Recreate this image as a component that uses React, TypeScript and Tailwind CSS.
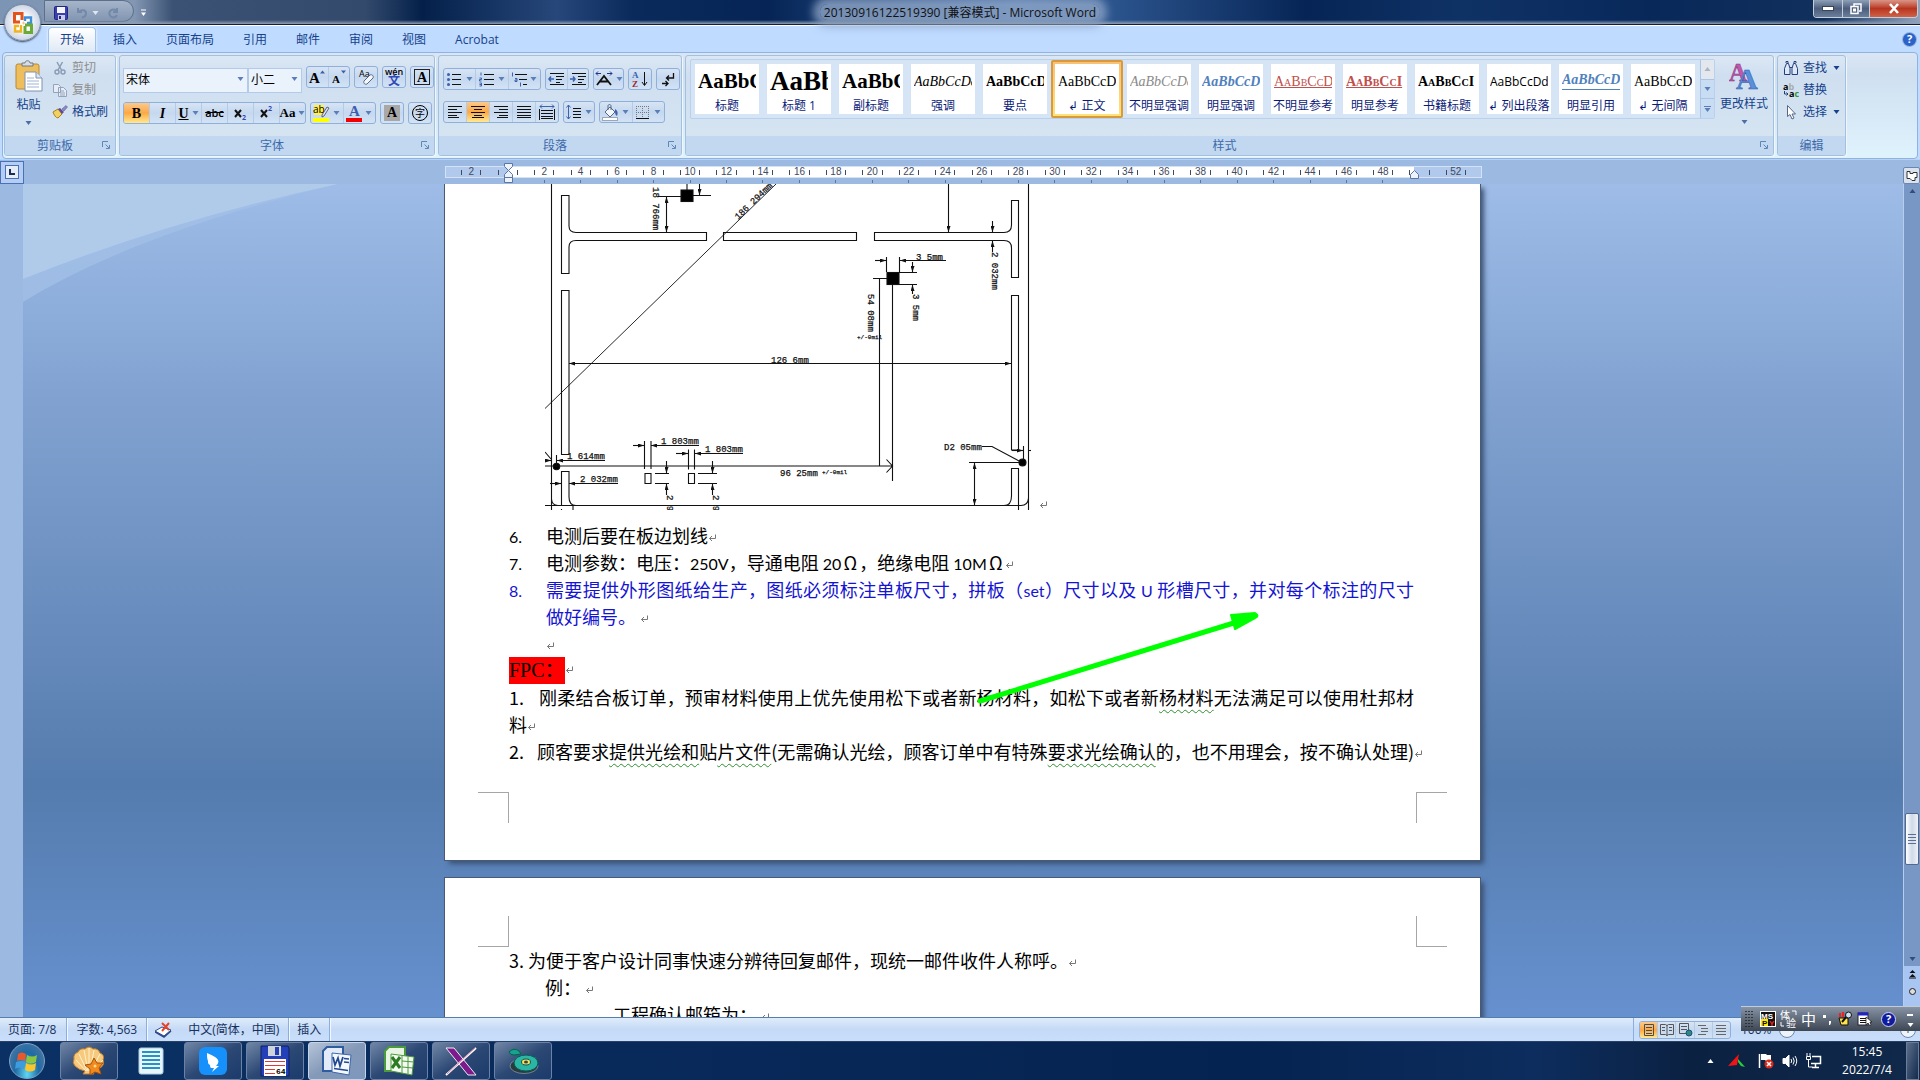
import type { ReactNode } from "react";
import clsx from "clsx";

const UI = "font-['Open_Sans','Noto_Sans_CJK_SC',sans-serif]";

/* ---------- small shared pieces ---------- */

function Caret({ className = "text-[#5a7fb8]" }: { className?: string }) {
  return (
    <svg width="7" height="4" viewBox="0 0 7 4" className={clsx("shrink-0", className)}>
      <path d="M0.5 0h6L3.5 4z" fill="currentColor" />
    </svg>
  );
}

function Mark() {
  return (
    <svg width="9" height="9" viewBox="0 0 9 9" className="inline-block shrink-0 text-[#777]">
      <path d="M7.5 0.5v4h-6M4 2L1.5 4.5L4 7" fill="none" stroke="currentColor" />
    </svg>
  );
}

function Launcher() {
  return (
    <button aria-label="更多选项" className="flex size-[10px] items-center justify-center">
      <svg width="9" height="9" viewBox="0 0 9 9" fill="none" stroke="#5f86b8">
        <path d="M0.5 6V0.5H6M3.5 3.5l3.5 3.5M7.5 4v3.5H4" />
      </svg>
    </button>
  );
}

function Group({ label, launcher, className, children }: { label: string; launcher?: boolean; className?: string; children: ReactNode }) {
  return (
    <section
      className={clsx(
        "flex h-[101px] flex-col rounded-[3px] border border-[#a3c0de] bg-linear-to-b from-[#dce7f4] from-0% via-[#cfdff0] via-20% to-[#d8e6f2] shadow-[1px_1px_0_#eef7fd]",
        className
      )}
    >
      <div className="flex min-h-0 flex-1">{children}</div>
      <div className="flex h-[19px] items-center rounded-b-[2px] bg-[#c1d8f0] px-1 text-[12px] text-[#3e6aaa]">
        <span className="flex-1 text-center">{label}</span>
        {launcher && <Launcher />}
      </div>
    </section>
  );
}

function Cluster({ children, className = "h-[22px]" }: { children: ReactNode; className?: string }) {
  return (
    <div className={clsx("flex shrink-0 divide-x divide-[#b4cbe8] overflow-hidden rounded-[3px] border border-[#8fb0db] bg-linear-to-b from-[#d7e4f4] via-[#c5d8ef] to-[#d3e3f5]", className)}>
      {children}
    </div>
  );
}

function Tool({ label, active, className, caret, children }: { label: string; active?: boolean; className?: string; caret?: boolean; children: ReactNode }) {
  return (
    <button
      aria-label={label}
      className={clsx(
        "flex min-w-0 flex-1 items-center justify-center text-black",
        active && "bg-linear-to-b from-[#fbc98a] via-[#fba843] to-[#ffe98f]",
        caret && "gap-[3px]",
        className
      )}
    >
      {children}
      {caret && <Caret />}
    </button>
  );
}

function Lines({ d, w = 16, extra, tone = "#111" }: { d: string; w?: number; extra?: ReactNode; tone?: string }) {
  return (
    <svg width={w} height="16" viewBox={`0 0 ${w} 16`} fill="none" stroke={tone} className="shrink-0">
      <path d={d} strokeWidth="1" />
      {extra}
    </svg>
  );
}

/* ---------- title bar and tabs ---------- */

function OfficeButton() {
  return (
    <button aria-label="Office 按钮" className="absolute top-1 left-1 z-10 flex size-[37px] items-center justify-center rounded-full border border-[#7f8ea8] bg-radial from-white from-30% via-[#e3e8f2] to-[#aebfd8] shadow-[0_1px_2px_#345]">
      <svg width="24" height="24" viewBox="0 0 24 24" fill="none" strokeWidth="3">
        <path d="M9 11H3.5V2.500H11V9" stroke="#e4531b" />
        <path d="M14 10V6.500h6V12h-4" stroke="#3f8edb" strokeWidth="2.400" />
        <path d="M10 14v6.500H4V15h4" stroke="#f3b31c" strokeWidth="2.400" />
        <path d="M14 14h6.500v7.500H14V15" stroke="#6aab35" />
        <path d="M11 12h3M12.500 10.500v3" stroke="#f6c08c" strokeWidth="1" />
      </svg>
    </button>
  );
}

function TitleBar() {
  return (
    <header className="relative flex h-[25px] items-start border-b border-[#10203c] bg-[linear-gradient(90deg,#7d95b5_0%,#8397b3_7%,#3b5274_9%,#334a6c_19%,#04204a_22%,#27477a_29%,#0a2a5c_33%,#062556_40%,#3e6ba8_53%,#062556_68%,#0f3264_76%,#08285a_86%,#12305c_95%,#90a3bd_100%)]">
      <div className="pointer-events-none absolute inset-x-0 bottom-0 h-1 bg-linear-to-b from-transparent to-[#8f9fb5]" />
      <div className="ml-[44px] flex h-[22px] w-[90px] items-center gap-2 rounded-r-full border border-[#5d6f8b] bg-linear-to-b from-[#a5b5ca] to-[#8295b1] pt-1 pl-[9px]">
        <button aria-label="保存">
          <svg width="14" height="14" viewBox="0 0 14 14">
            <rect x="0.500" y="0.500" width="13" height="13" rx="1" fill="#3c3fae" stroke="#23267e" />
            <rect x="3" y="1" width="8" height="6" fill="#f4f6ff" />
            <rect x="4" y="9" width="7" height="5" fill="#c9cbe8" />
            <rect x="5" y="10" width="2" height="3" fill="#23267e" />
          </svg>
        </button>
        <button aria-label="撤消" className="flex items-center gap-1">
          <svg width="12" height="12" viewBox="0 0 12 12" fill="none" stroke="#7289a9" strokeWidth="2">
            <path d="M2 1v4h4M2.500 5C6 2 10 3 10 6.500c0 2-1.500 3.500-4 4" />
          </svg>
          <Caret className="text-[#dfe6f0]" />
        </button>
        <button aria-label="恢复">
          <svg width="12" height="12" viewBox="0 0 12 12" fill="none" stroke="#7289a9" strokeWidth="2">
            <path d="M10 1v4H6M9.500 4A4 4 0 1 0 10 8" />
          </svg>
        </button>
      </div>
      <button aria-label="自定义快速访问工具栏" className="mt-[9px] ml-[6px]">
        <svg width="7" height="8" viewBox="0 0 7 8">
          <path d="M1 1h5" stroke="#fff" />
          <path d="M1 3.500h5L3.500 7z" fill="#fff" />
        </svg>
      </button>
      <h1 className="flex-1 pt-1 pr-[40px] text-center text-[12px] leading-[18px] text-[#111]">
        <span className="inline-block h-[16px] rounded-full bg-[#8ea5c6]/80 px-1 leading-[18px] shadow-[0_0_8px_7px_rgb(142_165_198/0.8)]">20130916122519390 [兼容模式] - Microsoft Word</span>
      </h1>
      <div className="mr-[2px] flex h-[18px] w-[105px] overflow-hidden rounded-b-[4px] border border-t-0 border-[#c3cedd]">
        <button aria-label="最小化" className="flex w-[29px] items-center justify-center border-r border-[#c3cedd] bg-linear-to-b from-[#8fa0b8] via-[#4c5e7c] to-[#6b7e9b]">
          <svg width="12" height="5" viewBox="0 0 12 5"><rect x="0.500" y="0.500" width="11" height="4" fill="#fff" stroke="#3a4458" /></svg>
        </button>
        <button aria-label="向下还原" className="flex w-[27px] items-center justify-center border-r border-[#c3cedd] bg-linear-to-b from-[#8fa0b8] via-[#4c5e7c] to-[#6b7e9b]">
          <svg width="12" height="12" viewBox="0 0 12 12" fill="none" stroke="#fff" strokeWidth="1.500"><path d="M4 3V1h7v7H9" /><rect x="1" y="3.500" width="7" height="7" /><rect x="3.500" y="6" width="2" height="2" strokeWidth="1" /></svg>
        </button>
        <button aria-label="关闭" className="flex flex-1 items-center justify-center bg-linear-to-b from-[#d99487] via-[#b8341f] to-[#cf6247]">
          <svg width="12" height="11" viewBox="0 0 12 11" stroke="#fff" strokeWidth="2.600"><path d="M2 1l8 9M10 1L2 10" /></svg>
        </button>
      </div>
    </header>
  );
}

const tabs = ["开始", "插入", "页面布局", "引用", "邮件", "审阅", "视图", "Acrobat"];

function Tabs() {
  return (
    <nav className="flex h-[27px] items-end border-t border-white bg-[#bfdbff] pl-[48px] text-[12px] text-[#15428b]">
      <div className="flex h-[25px] flex-1 gap-px">
        {tabs.map((t, i) => (
          <button
            key={t}
            className={clsx("h-full rounded-t-[4px] border border-b-0", i === 0 ? "mr-[2px] border-[#9dc3ee] bg-linear-to-b from-white to-[#dfe9f5] px-[11px] shadow-[0_0_3px_#fff]" : "border-transparent px-[13px]")}
          >
            {t}
          </button>
        ))}
      </div>
      <button aria-label="帮助" className="mr-[3px] mb-[5px] flex size-[15px] items-center justify-center rounded-full border border-[#9fb8dd] bg-[#2a62c9] text-[11px] font-bold text-white">
        ?
      </button>
    </nav>
  );
}

/* ---------- ribbon groups ---------- */

function Clipboard() {
  const rows = [
    {
      t: "剪切",
      off: true,
      icon: (
        <svg width="14" height="14" viewBox="0 0 14 14" fill="none" stroke="#8b9cb5" strokeWidth="1.500">
          <path d="M4 1l4.500 8M9.500 1L5 9" /><circle cx="4" cy="11" r="2" /><circle cx="10" cy="11" r="2" />
        </svg>
      ),
    },
    {
      t: "复制",
      off: true,
      icon: (
        <svg width="14" height="14" viewBox="0 0 14 14" fill="#e6ecf5" stroke="#93a3bb">
          <path d="M0.500 1.500h5l2 2v6h-7zM5.500 4.500h5l3 3v6h-8z" /><path d="M7 8h4M7 10h5M7 12h5" />
        </svg>
      ),
    },
    {
      t: "格式刷",
      icon: (
        <svg width="16" height="14" viewBox="0 0 16 14">
          <path d="M1 7l5-3 4 5-4 4c-2 0-4-3-5-6z" fill="#f1d25e" stroke="#a98118" />
          <path d="M6 4l2-1 4 4-2 2z" fill="#5b4a9c" /><path d="M10 4l4-3.500L15.500 2 12 6z" fill="#8f8cc4" stroke="#4b4785" strokeWidth="0.500" />
        </svg>
      ),
    },
  ];
  return (
    <Group label="剪贴板" launcher className="w-[112px] shrink-0">
      <button className="flex w-[47px] flex-col items-center pt-1 text-[12px] leading-4 text-[#15428b]">
        <svg width="28" height="32" viewBox="0 0 28 32">
          <rect x="1" y="4" width="23" height="25" rx="2" fill="#eebd5c" stroke="#b98a34" />
          <path d="M7 6V3h3c0-3 5-3 5 0h3v3z" fill="#d8dde4" stroke="#6f7885" />
          <path d="M10 12h11l6 6v13H10z" fill="#fff" stroke="#7c92b5" />
          <path d="M21 12v6h6" fill="#dce6f4" stroke="#7c92b5" />
          <path d="M12 18h7M12 21h12M12 24h12M12 27h12" stroke="#9fb4d3" />
        </svg>
        <span className="mt-[5px]">粘贴</span>
        <Caret className="mt-2 text-[#4a6fa8]" />
      </button>
      <div className="flex flex-col pt-[1px]">
        {rows.map((r) => (
          <button key={r.t} className={clsx("flex h-[22px] items-center gap-1 text-[12px]", r.off ? "text-[#8d8d8d]" : "text-[#15428b]")}>
            <span className="flex w-[16px] justify-center">{r.icon}</span>
            {r.t}
          </button>
        ))}
      </div>
    </Group>
  );
}

function Combo({ id, label, value, className }: { id: string; label: string; value: string; className: string }) {
  return (
    <div className={clsx("relative h-[25px]", className)}>
      <label htmlFor={id} className="sr-only">{label}</label>
      <select id={id} className="h-full w-full appearance-none border border-[#b3cbe8] bg-[#eaf2fb] pl-[2px] text-[12px] text-black">
        <option>{value}</option>
      </select>
      <Caret className="pointer-events-none absolute top-[11px] right-[4px] text-[#5a7fb8]" />
    </div>
  );
}

const SERIF = "font-['Liberation_Serif',serif]";

function FontGroup() {
  return (
    <Group label="字体" launcher className="w-[316px] shrink-0">
      <div className="flex flex-1 flex-col gap-[11px] pt-[10px] pl-[3px]">
        <div className="flex gap-1">
          <div className="flex">
            <Combo id="font" label="字体名称" value="宋体" className="w-[125px]" />
            <Combo id="size" label="字号" value="小二" className="w-[54px]" />
          </div>
          <Cluster className="h-[22px] w-[44px]">
            <Tool label="增大字体">
              <svg width="18" height="16" viewBox="0 0 18 16"><text x="1" y="14" fontSize="15" fontWeight="700" fontFamily="Liberation Serif">A</text><path d="M12 4.500h5L14.500 1.500z" fill="#3c5fa8" /></svg>
            </Tool>
            <Tool label="缩小字体">
              <svg width="18" height="16" viewBox="0 0 18 16"><text x="2" y="14" fontSize="11" fontWeight="700" fontFamily="Liberation Serif">A</text><path d="M11 1.500h5L13.500 4.500z" fill="#3c5fa8" /></svg>
            </Tool>
          </Cluster>
          <Cluster className="h-[22px] w-[24px]">
            <Tool label="清除格式">
              <svg width="17" height="17" viewBox="0 0 17 17">
                <text x="1" y="8" fontSize="9" fontFamily="Open Sans">Aa</text>
                <path d="M6 12l6-6c2-1 4 1 3 3l-6 6c-2 1-4-1-3-3z" fill="#f5f7fb" stroke="#55688a" />
              </svg>
            </Tool>
          </Cluster>
          <Cluster className="h-[22px] w-[24px]">
            <Tool label="拼音指南">
              <svg width="20" height="20" viewBox="0 0 20 20" textAnchor="middle"><text x="10" y="8" fontSize="9" fontWeight="600" fontFamily="Open Sans">wén</text><text x="10" y="18" fontSize="12" fontWeight="700" fontFamily="Noto Sans CJK SC" fill="#3149b5">文</text></svg>
            </Tool>
          </Cluster>
          <Cluster className="h-[22px] w-[24px]">
            <Tool label="字符边框"><span className={clsx(SERIF, "size-4 border border-[#222] text-[14px] leading-[15px] font-bold")}>A</span></Tool>
          </Cluster>
        </div>
        <div className="flex gap-1">
          <Cluster className="h-[22px] w-[183px] text-[14px]">
            <Tool label="加粗" active className={clsx(SERIF, "font-bold")}>B</Tool>
            <Tool label="倾斜" className={clsx(SERIF, "font-bold italic")}>I</Tool>
            <Tool label="下划线" className={clsx(SERIF, "font-bold")} caret><span className="underline">U</span></Tool>
            <Tool label="删除线" className="text-[11px] font-semibold"><s>abc</s></Tool>
            <Tool label="下标">
              <svg width="15" height="16" viewBox="0 0 15 16"><path d="M2 5l6 7M8 5l-6 7" stroke="#111" strokeWidth="2" /><text x="9" y="15" fontSize="7" fontWeight="700" fontFamily="Open Sans" fill="#3149b5">2</text></svg>
            </Tool>
            <Tool label="上标">
              <svg width="15" height="16" viewBox="0 0 15 16"><path d="M2 5l6 7M8 5l-6 7" stroke="#111" strokeWidth="2" /><text x="9" y="6" fontSize="7" fontWeight="700" fontFamily="Open Sans" fill="#3149b5">2</text></svg>
            </Tool>
            <Tool label="更改大小写" className={clsx(SERIF, "text-[13px] font-bold")} caret>Aa</Tool>
          </Cluster>
          <Cluster className="h-[22px] w-[66px]">
            <Tool label="突出显示" caret>
              <svg width="17" height="18" viewBox="0 0 17 18">
                <rect x="1" y="1" width="10" height="10" fill="#fff04a" />
                <text x="0" y="9" fontSize="10" fontFamily="Open Sans">ab</text>
                <path d="M9 11l5-8 2 1-5 8-2 1z" fill="#dfe5ef" stroke="#445" strokeWidth="0.800" />
                <rect x="0" y="14" width="16" height="4" fill="#ff0" />
              </svg>
            </Tool>
            <Tool label="字体颜色" caret>
              <svg width="16" height="18" viewBox="0 0 16 18">
                <text x="3" y="12" fontSize="15" fontFamily="Liberation Serif" fontWeight="700" fill="#3a5fae">A</text>
                <rect x="0" y="14" width="16" height="4" fill="#f00000" />
              </svg>
            </Tool>
          </Cluster>
          <Cluster className="h-[22px] w-[24px]">
            <Tool label="字符底纹"><span className={clsx(SERIF, "size-4 bg-[#a8a8a8] text-[14px] leading-4 font-bold")}>A</span></Tool>
          </Cluster>
          <Cluster className="h-[22px] w-[24px]">
            <Tool label="带圈字符"><span className="size-4 rounded-full border border-black text-[10px] leading-[14px]">字</span></Tool>
          </Cluster>
        </div>
      </div>
    </Group>
  );
}

const BLUE = "#3b62ad";

function ParagraphGroup() {
  return (
    <Group label="段落" launcher className="w-[244px] shrink-0">
      <div className="flex flex-1 flex-col gap-[11px] pt-3 pl-1">
        <div className="flex gap-1">
          <Cluster className="h-[22px] w-[98px]">
            <Tool label="项目符号" caret><Lines d="M5 3.500h9M5 8.500h9M5 13.500h9" extra={<g fill={BLUE} stroke="none"><circle cx="1.500" cy="3.500" r="1.500" /><circle cx="1.500" cy="8.500" r="1.500" /><circle cx="1.500" cy="13.500" r="1.500" /></g>} /></Tool>
            <Tool label="编号" caret><Lines d="M5 3.500h10M5 8.500h10M5 13.500h10" extra={<path d="M2 1.500v3M0.500 7h2v1.500h-2V10h2M0.500 12h2v3h-2M0.500 13.500h2" stroke={BLUE} />} /></Tool>
            <Tool label="多级列表" caret><Lines d="M4 3.500h12M8 8.500h8M12 13.500h4" extra={<path d="M1.500 1.500v4M4 7.500h2v3H4v-1.500h2M9.500 11.500v4" stroke={BLUE} />} /></Tool>
          </Cluster>
          <Cluster className="h-[22px] w-[44px]">
            <Tool label="减少缩进量"><Lines d="M2 2.500h14M8 5.500h8M8 8.500h6M8 11.500h4M2 13.500h14" extra={<path d="M6 8H1M3 5.500L1 8l2 2.500" stroke={BLUE} strokeWidth="1.500" />} /></Tool>
            <Tool label="增加缩进量"><Lines d="M2 2.500h14M8 5.500h8M8 8.500h6M8 11.500h4M2 13.500h14" extra={<path d="M0 8h5M3 5.500L5 8l-2 2.500" stroke={BLUE} strokeWidth="1.500" />} /></Tool>
          </Cluster>
          <Cluster className="h-[22px] w-[31px]">
            <Tool label="中文版式" caret><Lines w={18} d="" extra={<><path d="M2 14l7-9 7 9M5 10.500h8" strokeWidth="1.800" /><path d="M6 2.500H1M3 0.500L1 2.500l2 2M12 2.500h5M15 0.500l2 2-2 2" stroke="#22358c" /></>} /></Tool>
          </Cluster>
          <Cluster className="h-[22px] w-[24px]">
            <Tool label="排序"><svg width="16" height="18" viewBox="0 0 16 18"><text x="0" y="8" fontSize="9" fontWeight="700" fontFamily="Liberation Serif" fill={BLUE}>A</text><text x="0" y="17" fontSize="9" fontWeight="700" fontFamily="Liberation Serif" fill="#a0282c">Z</text><path d="M12.500 2v13M10 12l2.500 3.500L15 12" fill="none" stroke="#111" /></svg></Tool>
          </Cluster>
          <Cluster className="h-[22px] w-[24px]">
            <Tool label="显示编辑标记"><Lines d="" extra={<path d="M13.500 2v5H7M9 4.500L6.500 7 9 9.500M2 12.500h6M5.500 10L8 12.500 5.500 15" strokeWidth="1.300" />} /></Tool>
          </Cluster>
        </div>
        <div className="flex gap-1">
          <Cluster className="h-[22px] w-[116px]">
            <Tool label="左对齐"><Lines d="M1 2.500h14M1 5.500h9M1 8.500h14M1 11.500h9M1 13.500h11" /></Tool>
            <Tool label="居中" active><Lines d="M1 2.500h14M4 5.500h8M1 8.500h14M4 11.500h8M2 13.500h12" /></Tool>
            <Tool label="右对齐"><Lines d="M1 2.500h14M6 5.500h9M1 8.500h14M6 11.500h9M4 13.500h11" /></Tool>
            <Tool label="两端对齐"><Lines d="M1 2.500h14M1 5.500h14M1 8.500h14M1 11.500h14M1 13.500h14" /></Tool>
            <Tool label="分散对齐"><Lines d="M2 6.500h12M2 9.500h12M2 12.500h12M2 14.500h12M0.500 5v11M15.500 5v11" extra={<path d="M1 2.500h14M3 0.500L1 2.500l2 2M13 0.500l2 2-2 2" stroke={BLUE} />} /></Tool>
          </Cluster>
          <Cluster className="h-[22px] w-[32px]">
            <Tool label="行距" caret><Lines d="M7 4.500h8M7 7.500h8M7 10.500h8M7 13.500h8" extra={<path d="M2.500 1v14M0.500 3.500L2.500 1l2 2.500M0.500 12.500l2 2.500 2-2.500" stroke={BLUE} />} /></Tool>
          </Cluster>
          <Cluster className="h-[22px] w-[66px]">
            <Tool label="底纹" caret>
              <svg width="17" height="17" viewBox="0 0 17 17"><path d="M3 8l5-5 5 5-5 5z" fill="#f3f6fb" stroke="#55688a" /><path d="M6 6V2c0-2 3-2 3 0v4" fill="none" stroke="#55688a" /><path d="M13 5c3 2 3 4 2 7-2-1-2-3-2-7z" fill={BLUE} /><rect x="0.500" y="13.500" width="15" height="3" fill="#fff" stroke="#9aa7bb" /></svg>
            </Tool>
            <Tool label="边框" caret><Lines d="M1 14.500h13" extra={<path d="M1.500 2v12M7.500 2v12M13.500 2v12M1 2.500h13M1 8.500h13" stroke="#777" strokeDasharray="1 1" />} /></Tool>
          </Cluster>
        </div>
      </div>
    </Group>
  );
}

const styleItems = [
  { name: "标题", s: "AaBbC", c: "text-[21px] font-bold" },
  { name: "标题 1", s: "AaBb", c: "text-[27px] font-bold" },
  { name: "副标题", s: "AaBbC", c: "text-[21px] font-bold" },
  { name: "强调", s: "AaBbCcDd", c: "text-[14px] italic" },
  { name: "要点", s: "AaBbCcD", c: "text-[14px] font-bold" },
  { name: "↲ 正文", s: "AaBbCcDd", c: "text-[14px]", on: true },
  { name: "不明显强调", s: "AaBbCcDd", c: "text-[14px] italic text-[#8a8a8a]" },
  { name: "明显强调", s: "AaBbCcDd", c: "text-[14px] italic font-bold text-[#4f81bd]" },
  { name: "不明显参考", s: "AaBbCcDd", c: "text-[14px] [font-variant:small-caps] text-[#c0504d] underline" },
  { name: "明显参考", s: "AaBbCcI", c: "text-[14px] [font-variant:small-caps] font-bold text-[#c0504d] underline" },
  { name: "书籍标题", s: "AaBbCcI", c: "text-[14px] [font-variant:small-caps] font-bold" },
  { name: "↲ 列出段落", s: "AaBbCcDd", c: "text-[12px] font-['Open_Sans']" },
  { name: "明显引用", s: "AaBbCcDd", c: "text-[14px] italic font-bold text-[#4f81bd] border-b border-[#4f81bd] pb-[2px]" },
  { name: "↲ 无间隔", s: "AaBbCcDd", c: "text-[14px]" },
];

function StylesGroup() {
  return (
    <Group label="样式" launcher className="min-w-0 flex-1">
      <div className="mt-[3px] ml-1 flex h-[60px] min-w-0 flex-1 rounded-[2px] border border-[#b9d1ec] bg-[#d6e5f5]">
        <div className="flex min-w-0 flex-1 overflow-hidden">
          {styleItems.map((it) => (
            <button
              key={it.name}
              className={clsx("h-[58px] w-[72px] shrink-0 rounded-[2px] border-2 p-[2px]", it.on ? "border-[#d99a3c] bg-linear-to-b from-[#f8c078] to-[#ffe27a]" : "border-transparent")}
            >
              <span className="flex h-full flex-col justify-between overflow-hidden bg-white px-[3px]">
                <span className={clsx("mt-1 flex h-[27px] items-center overflow-hidden leading-none whitespace-nowrap text-black", SERIF)}>
                  <span className={it.c}>{it.s}</span>
                </span>
                <span className="-mx-[3px] text-center text-[12px] leading-[17px] whitespace-nowrap text-[#0b1b7a]">{it.name}</span>
              </span>
            </button>
          ))}
        </div>
        <div className="flex w-[14px] flex-col divide-y divide-[#a9c4e4] border-l border-[#a9c4e4] bg-[#c8dcf3]">
          <button aria-label="上一行" className="flex flex-1 items-center justify-center bg-[#e3e8ee]"><Caret className="rotate-180 text-[#aab4c2]" /></button>
          <button aria-label="下一行" className="flex flex-1 items-center justify-center"><Caret /></button>
          <button aria-label="其他" className="flex flex-1 flex-col items-center justify-center gap-px"><span className="h-px w-[7px] bg-[#5a7fb8]" /><Caret /></button>
        </div>
      </div>
      <button className="flex w-[58px] shrink-0 flex-col items-center pt-[5px] text-[12px] leading-4 text-[#15428b]">
        <svg width="30" height="30" viewBox="0 0 30 30">
          <text x="0" y="20" fontSize="25" fontWeight="700" fontFamily="Liberation Serif" fill="#c257ae" stroke="#83347a" strokeWidth="0.500">A</text>
          <text x="7" y="28" fontSize="30" fontWeight="700" fontFamily="Liberation Serif" fill="#5b8fdc" stroke="#2a57a5" strokeWidth="0.500">A</text>
        </svg>
        <span className="mt-[5px] whitespace-nowrap">更改样式</span>
        <Caret className="mt-2 text-[#4a6fa8]" />
      </button>
    </Group>
  );
}

function EditGroup() {
  return (
    <Group label="编辑" className="w-[69px] shrink-0">
      <div className="flex flex-1 flex-col pt-[1px] pl-[5px] text-[12px] text-[#15428b]">
        <button className="flex h-[22px] items-center gap-1">
          <svg width="16" height="14" viewBox="0 0 16 14" fill="#dfe8f6" stroke="#223f7c"><path d="M1.500 13.500v-6l2-5h2l1.500 5v6zM9 13.500v-6l1.500-5h2l2 5v6zM3 2V0.500h2V2M11 2V0.500h2V2M7 6.500h2" /></svg>
          查找 <Caret className="ml-[2px]" />
        </button>
        <button className="flex h-[22px] items-center gap-1">
          <svg width="16" height="16" viewBox="0 0 16 16" fontFamily="Open Sans" fontSize="9" fontWeight="700"><text x="0" y="8">a<tspan fill="#aaa">b</tspan></text><text x="6" y="15">a<tspan fill="#2c9a2c">c</tspan></text><path d="M1.500 9v3H5M3.500 10.500L5 12l-1.500 1.500" fill="none" stroke="#223f7c" /></svg>
          替换
        </button>
        <button className="flex h-[22px] items-center gap-1">
          <svg width="16" height="15" viewBox="0 0 16 15"><path d="M4.500 0.500v11l2.500-2 2 4.500 2-1-2-4h3.500z" fill="#fff" stroke="#55688a" /></svg>
          选择 <Caret className="ml-[2px]" />
        </button>
      </div>
    </Group>
  );
}

function Ribbon() {
  return (
    <div className="h-[107px] bg-[#bfdbff] px-[2px]">
      <div className="flex h-full gap-[3px] rounded-[4px] border border-[#8db2e3] bg-linear-to-b from-[#dbe6f4] via-[#cfdff0] via-20% to-[#dff3fd] px-px pt-[2px]">
        <Clipboard />
        <FontGroup />
        <ParagraphGroup />
        <StylesGroup />
        <EditGroup />
        <div className="w-[67px] shrink-0" />
      </div>
    </div>
  );
}

/* ---------- ruler ---------- */

const marks = Array.from({ length: 28 }, (_, i) => i * 2 - 2);

function Ruler() {
  return (
    <div className="flex h-[25px] items-center border-t border-[#b9d3f3] bg-[#9bb9e1]">
      <button aria-label="制表符" className="flex h-[23px] w-[24px] items-center justify-center border border-[#4a70b8] bg-[#b5cdf3]">
        <span className="flex size-[14px] items-center justify-center border border-[#4a70b8] bg-[#e3ecf8]">
          <svg width="6" height="6" viewBox="0 0 6 6"><path d="M1 0v5h5" fill="none" stroke="#1c2c50" strokeWidth="2" /></svg>
        </span>
      </button>
      <div className="flex-1">
        <div className="relative mx-auto w-[1037px]">
          <div className="flex h-[12px] border border-[#d4e2f6] bg-linear-to-r from-[#b1c9ec] from-[62px] via-white via-[62px] to-white">
            <div className="flex flex-1 bg-linear-to-l from-[#b1c9ec] from-[67px] to-transparent to-[67px] px-[7px] font-['Liberation_Sans'] text-[10px] leading-[10px] text-[#3e4a60]">
              {marks.map((n) => (
                <span key={n} className="grid flex-1 grid-cols-4 items-center">
                  <i className="h-[5px] w-px justify-self-end bg-[#3e4a60]" />
                  <span className="col-span-2 text-center">{n === 0 || n === 50 ? "" : Math.abs(n)}</span>
                  <i className="h-[5px] w-px bg-[#3e4a60]" />
                </span>
              ))}
            </div>
          </div>
          <div className="absolute inset-x-0 top-[14px] flex px-2">
            {marks.map((n) => (
              <i key={n} className={clsx("h-[3px] flex-1 bg-[linear-gradient(#5f7596,#5f7596)] bg-[length:1px_3px] bg-center bg-no-repeat", (n <= 0 || n >= 50) && "invisible")} />
            ))}
          </div>
          <svg width="11" height="21" viewBox="0 0 11 21" className="absolute -top-[3px] left-[58px]" fill="#eef3fb" stroke="#5b76a5">
            <path d="M1.500 0.500h8v3l-4 4-4-4zM5.500 7.500l4 4v3h-8v-3zM1.500 14.500h8v5h-8z" />
          </svg>
          <svg width="9" height="9" viewBox="0 0 9 9" className="absolute top-[4px] left-[965px]" fill="#eef3fb" stroke="#5b76a5">
            <path d="M4.500 0.500l4 4v4h-8v-4z" />
          </svg>
        </div>
      </div>
      <button aria-label="标尺" className="flex h-[17px] w-[17px] items-center justify-center self-end rounded-[2px] border border-[#6c86ad] bg-[#d9e2ee]">
        <svg width="12" height="12" viewBox="0 0 12 12" fill="#fff" stroke="#333"><path d="M1 1.500h3v2h3v-1h4v5h-2v3H6l-2-2H1z" /></svg>
      </button>
    </div>
  );
}

/* ---------- board outline drawing ---------- */

function BoardDrawing() {
  return (
    <svg width="486" height="326" viewBox="545 184 486 326" fill="none" stroke="#111" strokeWidth="1.100" className="shrink-0">
      <defs>
        <marker id="tip" viewBox="0 0 6 4" refX="6" refY="2" markerWidth="6" markerHeight="4" markerUnits="userSpaceOnUse" orient="auto-start-reverse">
          <path d="M0 0L6 2L0 4z" fill="#111" stroke="none" />
        </marker>
      </defs>
      <path d="M551.500 184V510M1028.500 184V510M545 505.500H1021Q1028 505.500 1028.500 498M551.500 499Q552 505.500 558 505.500" />
      <path d="M561.500 195.500H569V226Q569 232.500 576 232.500H706.500V240.500H576Q569 240.500 569 247V273.500H561.500z" />
      <path d="M723.500 232.500H856.500V240.500H723.500zM561.500 290.500H569V454.500H561.500zM1011.500 295.500H1018.500V450H1011.500z" />
      <path d="M874.500 232.500H1004Q1011.500 232.500 1011.500 225V200.500H1018.500V277.500H1011.500V248Q1011.500 240.500 1004 240.500H874.500z" />
      <path d="M561.500 505.500V471.500H569V497Q569 505.500 576 505.500M1004 505.500Q1011.500 505.500 1011.500 496V468.500H1018.500V510M561.500 509v1" />
      <path d="M545 408.500L776 184" strokeWidth="0.900" />
      <g fill="#000">
        <rect x="681" y="190" width="12" height="11.500" />
        <rect x="887" y="272.500" width="12" height="12" />
        <circle cx="556.500" cy="466.500" r="3.200" />
        <circle cx="1022.500" cy="462.500" r="3.500" />
      </g>
      <path d="M687 184v6M658 196.500h23M693 195.500h18M886.500 257v15M899.500 257v15M899 272.500h18M899 284.500h18M873 278.500h14M879.500 278.500V466M892.500 285V481" />
      <path d="M545 466H892.500M886.500 459.500L892.500 466L886.500 472.500" />
      <path d="M556.500 455v10M644.500 441v28M651 441v28M688.500 449.500v20M694.500 449.500v20M645 473.500h6v10h-6zM688.500 473.500h6v10h-6z" />
      <path d="M655 473.500h14M655 483.500h14M698 473.500h19M698 483.500h19M982 446.500h10L1019 461M1023.500 446v14M969 462.500h50M573 505v5M545 452l6 7" />
      <g markerEnd="url(#tip)">
        <path d="M699.500 184V195" />
        <path d="M948.500 184V232" />
        <path d="M992.500 221V232" />
        <path d="M992.500 252V241" />
        <path d="M875 260.500H886" />
        <path d="M946 260.500H900" />
        <path d="M912.500 262V272" />
        <path d="M912.500 294V285" />
        <path d="M545 460.500H551" />
        <path d="M605 460.500H557" />
        <path d="M550 483.500H561" />
        <path d="M618 483.500H569" />
        <path d="M633 445.500H644" />
        <path d="M699 445.500H651" />
        <path d="M676 453.500H688" />
        <path d="M743 453.500H695" />
        <path d="M666.500 461V473" />
        <path d="M666.500 495V484" />
        <path d="M712.500 461V473" />
        <path d="M712.500 495V484" />
        <path d="M1037 450.500H1029" />
        <path d="M1012 450.500H1023" />
      </g>
      <g markerStart="url(#tip)" markerEnd="url(#tip)">
        <path d="M666.500 197V232" />
        <path d="M569 363.500H1011" />
        <path d="M974.500 463V505" />
      </g>
      <g fill="#111" stroke="#111" strokeWidth="0.250" fontFamily="Liberation Mono" fontSize="9">
        <text x="771" y="363">126 6mm</text>
        <text x="916" y="260">3 5mm</text>
        <text x="780" y="476">96 25mm</text>
        <text x="822" y="474" fontSize="6">+/-0mil</text>
        <text x="567" y="459">1 614mm</text>
        <text x="580" y="482">2 032mm</text>
        <text x="661" y="444">1 803mm</text>
        <text x="705" y="452">1 803mm</text>
        <text x="944" y="450">D2 05mm</text>
        <text x="857" y="339" fontSize="6">+/-0mil</text>
        <text transform="translate(653 187) rotate(90)">18 766mm</text>
        <text transform="translate(992 252) rotate(90)">2 032mm</text>
        <text transform="translate(913 294) rotate(90)">3 5mm</text>
        <text transform="translate(868 294) rotate(90)">54 08mm</text>
        <text transform="translate(667 495) rotate(90)">2 9</text>
        <text transform="translate(713 495) rotate(90)">2 9</text>
        <text transform="translate(738 220) rotate(-44)">186 294mm</text>
      </g>
    </svg>
  );
}

/* ---------- document ---------- */

function Wavy({ children }: { children: ReactNode }) {
  return <span className="underline decoration-[#2f8f2f] decoration-wavy decoration-1 underline-offset-4">{children}</span>;
}

function Ohm() {
  return <span className="inline-block w-[18px] text-center">Ω</span>;
}

const latin = "font-['Lato'] text-[16px] leading-[18px]";
const full = "min-w-0 flex-1 whitespace-nowrap text-justify [text-align-last:justify]";

function Item({ n, blue, children }: { n?: string; blue?: boolean; children: ReactNode }) {
  return (
    <div className={clsx("flex items-baseline", blue && "text-[#1414d2]")}>
      <span className={clsx("w-[37px] shrink-0", latin)}>{n}</span>
      {children}
    </div>
  );
}

function Crop({ bottom }: { bottom?: boolean }) {
  const side = bottom ? "border-b" : "border-t";
  return (
    <div className="flex justify-between px-[33px]">
      <i className={clsx("size-[31px] border-r border-[#a6a6a6]", side)} />
      <i className={clsx("size-[31px] border-l border-[#a6a6a6]", side)} />
    </div>
  );
}

const sheet =
  "relative mx-auto flex w-[1035px] flex-col bg-white shadow-[0_0_0_1px_#4a5a75,4px_4px_5px_#3b5376] font-['Noto_Sans_CJK_SC',sans-serif] text-[18px] leading-[27px] text-black";

function Document() {
  return (
    <main className="relative flex min-h-0 flex-1 bg-[linear-gradient(#9ebce7_0%,#81a2d1_26%,#557cae_72%,#6691cf_100%)]">
      <div className="w-[23px] shrink-0 bg-[#9bb9e1]" />
      <div className="relative min-w-0 flex-1 overflow-hidden pr-px">
        <svg width="320" height="120" viewBox="0 0 320 120" className="absolute top-0 left-0">
          <path d="M0 118Q110 50 315 0H0z" fill="#a1bfe6" opacity="0.800" />
          <path d="M0 95Q150 35 315 0H0z" fill="#b0caea" />
        </svg>
        <article className={clsx(sheet, "h-[676px] pb-[37px]")}>
          <div className="flex items-end gap-1 pl-[100px]">
            <BoardDrawing />
            <span className="flex h-[9px] pl-1"><Mark /></span>
          </div>
          <div className="mt-3 pr-[66px] pl-[64px]">
            <Item n="6."><span>电测后要在板边划线<Mark /></span></Item>
            <Item n="7.">
              <span>电测参数：电压：<span className={latin}>250V</span>，导通电阻 <span className={latin}>20</span><Ohm />，绝缘电阻 <span className={latin}>10M</span><Ohm /><Mark /></span>
            </Item>
            <Item n="8." blue>
              <span className={full}>需要提供外形图纸给生产，图纸必须标注单板尺寸，拼板（<span className={latin}>set</span>）尺寸以及 <span className={latin}>U</span> 形槽尺寸，并对每个标注的尺寸</span>
            </Item>
            <Item blue><span>做好编号。 <Mark /></span></Item>
            <Item><span><Mark /></span></Item>
            <h2 className="flex h-[27px] items-center font-['Liberation_Serif','Noto_Sans_CJK_SC'] text-[20px]"><span className="bg-[#ff0000]">FPC：</span><Mark /></h2>
            <div className="flex">
              <span className="w-[30px] shrink-0">1.</span>
              <p className={full}>刚柔结合板订单，预审材料使用上优先使用松下或者新杨材料，如松下或者新<Wavy>杨材料</Wavy>无法满足可以使用杜邦材</p>
            </div>
            <p>料<Mark /></p>
            <div className="relative flex">
              <span className="w-[28px] shrink-0">2.</span>
              <p className={full}>顾客要求<Wavy>提供光绘和</Wavy>贴<Wavy>片文件</Wavy>(无需确认光绘，顾客订单中有特殊<Wavy>要求光绘确认</Wavy>的，也不用理会，按不确认处理)</p>
              <span className="absolute left-full"><Mark /></span>
            </div>
          </div>
          <div className="mt-auto"><Crop /></div>
          <svg width="284" height="94" viewBox="0 0 284 94" className="absolute top-[427px] left-[530px]">
            <path d="M5 90L262 11" stroke="#00ff00" strokeWidth="5" strokeLinecap="round" />
            <path d="M256 4L280 2Q285 5 280 7L260 18z" fill="#00ff00" stroke="#00ff00" strokeWidth="2" strokeLinejoin="round" />
          </svg>
        </article>
        <article className={clsx(sheet, "mt-[18px] h-[400px] pt-[38px]")}>
          <Crop bottom />
          <div className="pl-[64px]">
            <p>3. 为便于客户设计同事快速分辨待回复邮件，现统一邮件收件人称呼。<Mark /></p>
            <p className="pl-9">例： <Mark /></p>
            <p className="pl-[104px]">工程确认邮箱为： <Mark /></p>
          </div>
        </article>
      </div>
      <div className="flex w-[17px] shrink-0 flex-col items-center border-l border-[#b7cdeb] bg-[#7897c4]">
        <button aria-label="向上滚动" className="flex h-[14px] items-center"><Caret className="rotate-180 text-[#334d7a]" /></button>
        <div className="flex-1" />
        <div className="flex h-[52px] w-[14px] flex-col items-center justify-center gap-[2px] rounded-[2px] border border-[#51688f] bg-linear-to-r from-white via-[#cfd9e8] to-[#eef2f8]">
          <i className="h-px w-2 bg-[#5c6f8f]" />
          <i className="h-px w-2 bg-[#5c6f8f]" />
          <i className="h-px w-2 bg-[#5c6f8f]" />
          <i className="h-px w-2 bg-[#5c6f8f]" />
        </div>
        <div className="h-[87px]" />
        <button aria-label="向下滚动" className="flex h-[14px] items-center"><Caret className="text-[#334d7a]" /></button>
        <div className="flex h-[51px] w-full flex-col items-center gap-[9px] bg-[#a9c5f2] pt-[4px]">
          <svg width="7" height="9" viewBox="0 0 7 9" fill="#111"><path d="M3.500 0L6.500 3h-6zM3.500 4L6.500 7h-6z" /><path d="M0 8h7" stroke="#111" /></svg>
          <i className="size-[7px] rounded-full border border-[#222] bg-[#ddd]" />
        </div>
      </div>
    </main>
  );
}

/* ---------- status bar ---------- */

function StatusBar() {
  const sep = "border-r border-[#8aaede] shadow-[1px_0_0_#f2f8ff]";
  return (
    <footer className="relative flex h-6 items-stretch border-t border-[#567db0] bg-linear-to-b from-[#dfecfb] via-[#c5daf6] via-50% to-[#c9defa] text-[12px] text-[#15315f]">
      <button className={clsx("pr-[10px] pl-2", sep)}>页面: 7/8</button>
      <button className={clsx("px-[9px]", sep)}>字数: 4,563</button>
      <button aria-label="校对" className="px-2">
        <svg width="17" height="16" viewBox="0 0 17 16"><path d="M0 9l7-4 9 3-7 6z" fill="#fff" stroke="#2c4a8c" /><path d="M0 10l9 5 7-6" fill="none" stroke="#2c4a8c" strokeWidth="1.500" /><path d="M7 1l7 7M14 1L7 9" stroke="#e2452c" strokeWidth="2" /></svg>
      </button>
      <button className={clsx("pr-[9px] pl-2", sep)}>中文(简体，中国)</button>
      <button className={clsx("px-2", sep)}>插入</button>
      <div className="flex-1" />
      <div className="flex w-[287px] items-center border-l border-[#8aaede] pl-[5px]">
        <Cluster className="h-[18px] w-[92px]">
          <Tool label="页面视图" active><Lines tone="#4d4d4d" d="M3.500 2.500h9v11h-9zM5 5.500h6M5 8.500h6M5 11.500h6" /></Tool>
          <Tool label="阅读版式视图"><Lines tone="#555" d="M1.500 2.500h5l1.500 1 1.500-1h5v10h-5l-1.500 1-1.500-1h-5zM8 3v11M3 5.500h3M3 8.500h3M10 5.500h3M10 8.500h3" /></Tool>
          <Tool label="Web 版式视图"><Lines tone="#555" d="M2.500 1.500h9v10h-9zM4 4.500h6M4 7.500h6" extra={<circle cx="12" cy="11" r="3" fill="#2e8b7a" stroke="#1c4f8a" />} /></Tool>
          <Tool label="大纲视图"><Lines tone="#666" d="M3 3.500h8M6 6.500h7M6 9.500h7M3 12.500h8" /></Tool>
          <Tool label="普通视图"><Lines tone="#666" d="M3 3.500h10M3 6.500h10M3 9.500h10M3 12.500h10" /></Tool>
        </Cluster>
        <span className="ml-[10px] w-[30px]">100%</span>
        <button aria-label="缩小" className="ml-2 size-4 rounded-full border border-[#6a86b5] bg-[#eef4fc] leading-3">−</button>
        <span className="flex-1" />
        <button aria-label="放大" className="mr-1 size-4 rounded-full border border-[#6a86b5] bg-[#eef4fc] leading-3">+</button>
      </div>
      {/* input method bar floats above the zoom controls */}
      <div className="absolute right-0 -top-[12px] flex h-[25px] w-[179px] items-center gap-1 border-t border-[#c3ccd8] bg-linear-to-b from-[#8794a6] to-[#3d4653] pl-1 text-white">
        <svg width="8" height="17" viewBox="0 0 8 17" stroke="#222" strokeDasharray="1 2" strokeWidth="1.500"><path d="M1 0v17M4 0v17M7 0v17" /></svg>
        <svg width="16" height="16" viewBox="0 0 16 16" className="ml-[3px]" fontFamily="Liberation Sans" fontSize="8" fontWeight="700">
          <rect width="16" height="16" fill="#fff" /><rect x="1" y="1" width="14" height="7" fill="#111" /><rect x="1" y="8" width="7" height="7" fill="#ffe800" /><rect x="8" y="8" width="7" height="7" fill="#111" />
          <text x="1" y="7.500" fill="#fff">MS</text><text x="2" y="14.500" fill="#111">P</text><text x="9" y="14.500" fill="#f22">Y</text>
        </svg>
        <svg width="17" height="18" viewBox="0 0 17 18" fill="#fff" fontFamily="Noto Sans CJK SC"><text x="0" y="9" fontSize="10">体</text><text x="6" y="17" fontSize="10">验</text><path d="M12 1h4v4M1 12v4h3" fill="none" stroke="#fff" /></svg>
        <span className="text-[15px] leading-none">中</span>
        <svg width="13" height="14" viewBox="0 0 13 14" fill="#fff"><rect x="3" y="3" width="3" height="3" /><path d="M9 9h2v2l-1 2H9z" /></svg>
        <svg width="16" height="16" viewBox="0 0 16 16"><path d="M2 7h9v7H4z" fill="#ffe34a" stroke="#111" /><path d="M3 6V2M6 6V1" stroke="#e22" strokeWidth="2" /><path d="M5 11l5-6" stroke="#111" strokeWidth="2" /><circle cx="11.500" cy="4" r="3" fill="#cfe0f4" stroke="#111" /></svg>
        <svg width="16" height="16" viewBox="0 0 16 16"><rect x="1" y="2" width="10" height="12" fill="#fff" stroke="#223" /><path d="M1 3h10" stroke="#22c" strokeWidth="3" /><path d="M3 7.500h6M3 9.500h6M3 11.500h6" stroke="#111" /><path d="M9 6v8l2-2 2 3 1-1-1-3h2z" fill="#fff" stroke="#111" strokeWidth="0.700" /></svg>
        <span className="ml-1 flex size-[15px] shrink-0 items-center justify-center rounded-full border border-[#cdd6ff] bg-[#101c9c] text-[11px] font-bold">?</span>
        <span className="flex flex-1 flex-col items-center gap-[7px] pt-[2px]"><i className="h-[2px] w-[6px] bg-white" /><Caret className="text-white" /></span>
      </div>
    </footer>
  );
}

/* ---------- taskbar ---------- */

const apps: { name: string; kind?: "plain" | "active"; icon: ReactNode }[] = [
  {
    name: "贝壳",
    icon: (
      <svg width="34" height="30" viewBox="0 0 34 30">
        <path d="M11 28l2-3Q7 24 3 20Q0 17 2 13Q1 8 6 6Q8 2 13 3Q17-1 21 3Q26 2 28 7Q33 9 31 14Q33 19 28 22Q24 25 20 25l2 3z" fill="#f6c97d" stroke="#c07f2c" />
        <path d="M14 25L4 14M15 25L7 8M16 25L12 4M17 25V2M18 25L22 4M19 25L28 8M20 25L31 14" stroke="#fff1cf" />
        <path d="M22 12l3 5 6 0-4 5 2 6-6-2-5 3 0-6-5-4 6-1z" fill="#f08a1d" stroke="#a84f0c" /><circle cx="23" cy="20" r="1.500" fill="#ffd890" />
      </svg>
    ),
  },
  {
    name: "记事本",
    kind: "plain",
    icon: (
      <svg width="26" height="28" viewBox="0 0 26 28"><rect x="1" y="1" width="24" height="26" rx="2" fill="#e8f5fc" stroke="#a8cfe3" /><path d="M4 5h18M4 9h18M4 13h18M4 17h18M4 21h18" stroke="#2792c4" strokeWidth="2" /></svg>
    ),
  },
  {
    name: "钉钉",
    icon: (
      <svg width="28" height="28" viewBox="0 0 28 28"><rect width="28" height="28" rx="6" fill="#1690fb" /><path d="M8 6c4 2 10 4 11 7 1 2 0 4-2 6h3l-7 6 2-4h-3c-1-1-1-2-1-3-2-1-2-2-2-4-1-2-1-5-1-8z" fill="#fff" /></svg>
    ),
  },
  {
    name: "Total Commander",
    icon: (
      <svg width="30" height="32" viewBox="0 0 30 32"><path d="M1 1h27l1 2v28H1z" fill="#2340b8" stroke="#101f66" /><rect x="8" y="1" width="13" height="10" fill="#cfd4dc" /><rect x="15" y="2" width="4" height="8" fill="#2340b8" /><rect x="4" y="14" width="22" height="17" fill="#fff" /><path d="M5 16.500h20M5 20.500h20M5 24.500h10M5 28.500h10" stroke="#d63a3a" /><text x="16" y="29" fontSize="8" fontFamily="Liberation Mono" fontWeight="700">64</text></svg>
    ),
  },
  {
    name: "Word",
    kind: "active",
    icon: (
      <svg width="31" height="31" viewBox="0 0 31 31"><path d="M5 1h16v24H1V5z" fill="#e3ebf8" stroke="#2f5b9f" strokeWidth="2" /><path d="M10 7l19 2-2 20-17-3z" fill="#f4f8ff" stroke="#3a66ac" /><path d="M11 11l2 8 3-7 2 8 3-9" fill="none" stroke="#23488f" strokeWidth="1.800" /><path d="M22 12.500l5 0.500M22 16l5 0.500M12 22.500l14 2" stroke="#23488f" strokeWidth="1.500" /></svg>
    ),
  },
  {
    name: "Excel",
    icon: (
      <svg width="31" height="31" viewBox="0 0 31 31"><path d="M5 1h16v24H1V5z" fill="#e9f5e4" stroke="#4b9a3c" strokeWidth="2" /><path d="M7 8l23 3-2 18-21-4z" fill="#f4fbf0" stroke="#4b9a3c" /><path d="M18 10v17M24 11v17M18 15l12 1M18 21l11 1" stroke="#4b9a3c" /><path d="M8 11l8 11M16 11L8 22" stroke="#2b7a24" strokeWidth="3" /></svg>
    ),
  },
  {
    name: "X",
    icon: (
      <svg width="32" height="29" viewBox="0 0 32 29"><path d="M1 1h8l22 27h-8z" fill="#7d1a8c" stroke="#fff" strokeWidth="0.900" /><path d="M31 1L1 28" stroke="#fff" strokeWidth="2" /><path d="M30 1L2 27" stroke="#d13b6a" strokeWidth="0.600" /></svg>
    ),
  },
  {
    name: "CAM",
    icon: (
      <svg width="31" height="28" viewBox="0 0 31 28"><ellipse cx="16" cy="19" rx="14" ry="7.500" fill="#2a3b40" stroke="#9fb3b8" strokeWidth="0.600" /><ellipse cx="18" cy="16" rx="12" ry="8" fill="#2bb5a5" stroke="#0a5b53" /><ellipse cx="18" cy="15" rx="4.500" ry="3" fill="#f3e05a" stroke="#0a5b53" /><ellipse cx="18" cy="15" rx="2" ry="1.500" fill="#444" /><path d="M1 5q5-5 10-1l2 3-7 1Q2 8 1 5z" fill="#16a392" stroke="#064" /></svg>
    ),
  },
];

function Taskbar() {
  return (
    <nav className="flex h-[39px] items-stretch border-t border-[#2a4166] bg-[linear-gradient(90deg,#0b3164_0%,#082a5b_30%,#052350_65%,#0d2d5e_80%,#0b2142_88%,#10294b_100%)] text-white">
      <button aria-label="开始菜单" className="my-px ml-[9px] flex size-[36px] items-center justify-center rounded-full border border-[#7ea3c9] bg-radial-[at_50%_90%] from-[#5fd6f4] via-[#1f6aa5] to-[#5a7ba0]">
        <svg width="24" height="24" viewBox="0 0 24 24">
          <path d="M3 5q4-3 8 0l-1 7q-4-2-8 0z" fill="#e8582a" /><path d="M12 6q5 3 10 0l-1 7q-5 3-10 0z" fill="#8cc63f" />
          <path d="M1 13q5-2 9 0l-1 7q-5-3-9 0z" fill="#3d9be0" /><path d="M11 14q5 3 10 0l-1 7q-5 3-10 0z" fill="#fbc62c" />
        </svg>
      </button>
      <div className="ml-[15px] flex gap-1">
        {apps.map((a) => (
          <button
            key={a.name}
            aria-label={a.name}
            className={clsx(
              "flex w-[58px] items-center justify-center rounded-[3px] border",
              a.kind === "plain" && "border-transparent",
              a.kind === "active" && "border-[#c5d3e6] bg-linear-to-br from-[#b5c4d8] via-[#8499b8] to-[#7d97bd]",
              !a.kind && "border-[#6b82a6] bg-linear-to-br from-[#7187a6] via-[#2c4874] to-[#1b3b6b]"
            )}
          >
            {a.icon}
          </button>
        ))}
      </div>
      <div className="flex-1" />
      <div className="flex items-center">
        <button aria-label="显示隐藏的图标" className="mr-[14px]"><Caret className="rotate-180 text-white" /></button>
        <svg width="17" height="14" viewBox="0 0 17 14" className="mr-[13px]"><path d="M0 12L11 0L9 11z" fill="#f01414" /><path d="M10 5l7 8-4-1-3-4z" fill="#25d03c" /></svg>
        <svg width="16" height="16" viewBox="0 0 16 16" className="mr-2"><path d="M1.500 1v14" stroke="#fff" strokeWidth="1.500" /><path d="M3 1h5l1 1h4v6H8L7 7H3z" fill="#fff" /><circle cx="11" cy="11" r="4.500" fill="#d92a1c" /><path d="M9 9l4 4M13 9l-4 4" stroke="#fff" strokeWidth="1.500" /></svg>
        <svg width="16" height="14" viewBox="0 0 16 14" className="mr-2" fill="none" stroke="#fff"><path d="M1 4.500h2.500L7 1v12L3.500 9.500H1z" fill="#fff" /><path d="M9 5q1.500 2 0 4M11 3.500q2.500 3.500 0 7M13 2q3.500 5 0 10" /></svg>
        <svg width="16" height="16" viewBox="0 0 16 16" fill="none" stroke="#fff"><path d="M6 3.500h8.500v7H5M9.500 11v3M6 14.500h7" strokeWidth="1.500" /><path d="M1 0v3M4 0v3M0.500 3.500h4v3h-4zM2.500 7v7h4" /></svg>
        <div className="w-[84px] pl-[6px] text-center text-[12px] leading-[18px]">
          <div>15:45</div>
          <div>2022/7/4</div>
        </div>
      </div>
      <button aria-label="显示桌面" className="mr-[1px] w-[13px] border border-[#6b7d96] bg-linear-to-br from-[#5c6f8c] to-[#142b4d]" />
    </nav>
  );
}

export default function App() {
  return (
    <div className={clsx("relative flex h-screen min-w-[1500px] flex-col overflow-hidden", UI)}>
      <OfficeButton />
      <TitleBar />
      <Tabs />
      <Ribbon />
      <Ruler />
      <Document />
      <StatusBar />
      <Taskbar />
    </div>
  );
}
